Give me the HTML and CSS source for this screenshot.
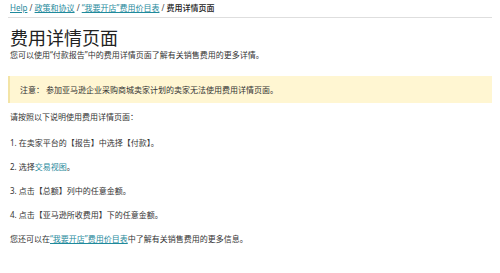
FILE: index.html
```html
<!DOCTYPE html>
<html lang="zh-CN">
<head>
<meta charset="utf-8">
<title>费用详情页面</title>
<link rel="stylesheet" href="styles.css">
</head>
<body>
<div class="page">
  <nav class="breadcrumb">
    <a href="#">Help</a> / <a href="#">政策和协议</a> / <a href="#">“我要开店”费用价目表</a> / <span class="current">费用详情页面</span>
  </nav>
  <h1 class="title">费用详情页面</h1>
  <p class="subtitle">您可以使用“付款报告”中的费用详情页面了解有关销售费用的更多详情。</p>
  <div class="note">注意： 参加亚马逊企业采购商城卖家计划的卖家无法使用费用详情页面。</div>
  <div class="steps">
    <p class="intro">请按照以下说明使用费用详情页面：</p>
    <p>1. 在卖家平台的【报告】中选择【付款】。</p>
    <p>2. 选择<a href="#" class="plain">交易视图</a>。</p>
    <p>3. 点击【总额】列中的任意金额。</p>
    <p>4. 点击【亚马逊所收费用】下的任意金额。</p>
    <p>您还可以在<a href="#">“我要开店”费用价目表</a>中了解有关销售费用的更多信息。</p>
  </div>
</div>
</body>
</html>
```
FILE: styles.css
```css
html, body {
  margin: 0;
  padding: 0;
  background: #ffffff;
}
body {
  font-family: "Noto Sans", "Noto Sans CJK SC", "Liberation Sans", sans-serif;
  color: #333333;
}
.page {
  padding: 0 8px;
}
a {
  color: #1f8a9c;
  text-decoration: underline;
}
a.plain {
  text-decoration: none;
}
.breadcrumb {
  padding: 2px 2px 4px 2px;
  font-size: 8px;
  line-height: 11px;
  border-bottom: 1px solid #dedede;
  color: #444;
}
.breadcrumb .current {
  color: #222;
  font-weight: 500;
}
.title {
  margin: 9px 0 0 0;
  padding-left: 2px;
  font-size: 18px;
  line-height: 22px;
  font-weight: 400;
  color: #222;
}
.subtitle {
  margin: 0;
  padding-left: 2px;
  font-size: 8px;
  line-height: 12px;
}
.note {
  margin-top: 15px;
  background: #fff6d2;
  border-left: 2px solid #f3e4a6;
  padding: 7.5px 10px;
  font-size: 8px;
  line-height: 12px;
  color: #333;
}
.steps {
  display: flex;
  flex-direction: column;
  gap: 12px;
  margin-top: 8px;
  padding-left: 2px;
  font-size: 8px;
  line-height: 12px;
}
.steps p {
  margin: 0;
}
.steps .intro {
  margin-bottom: 2px;
}
```
